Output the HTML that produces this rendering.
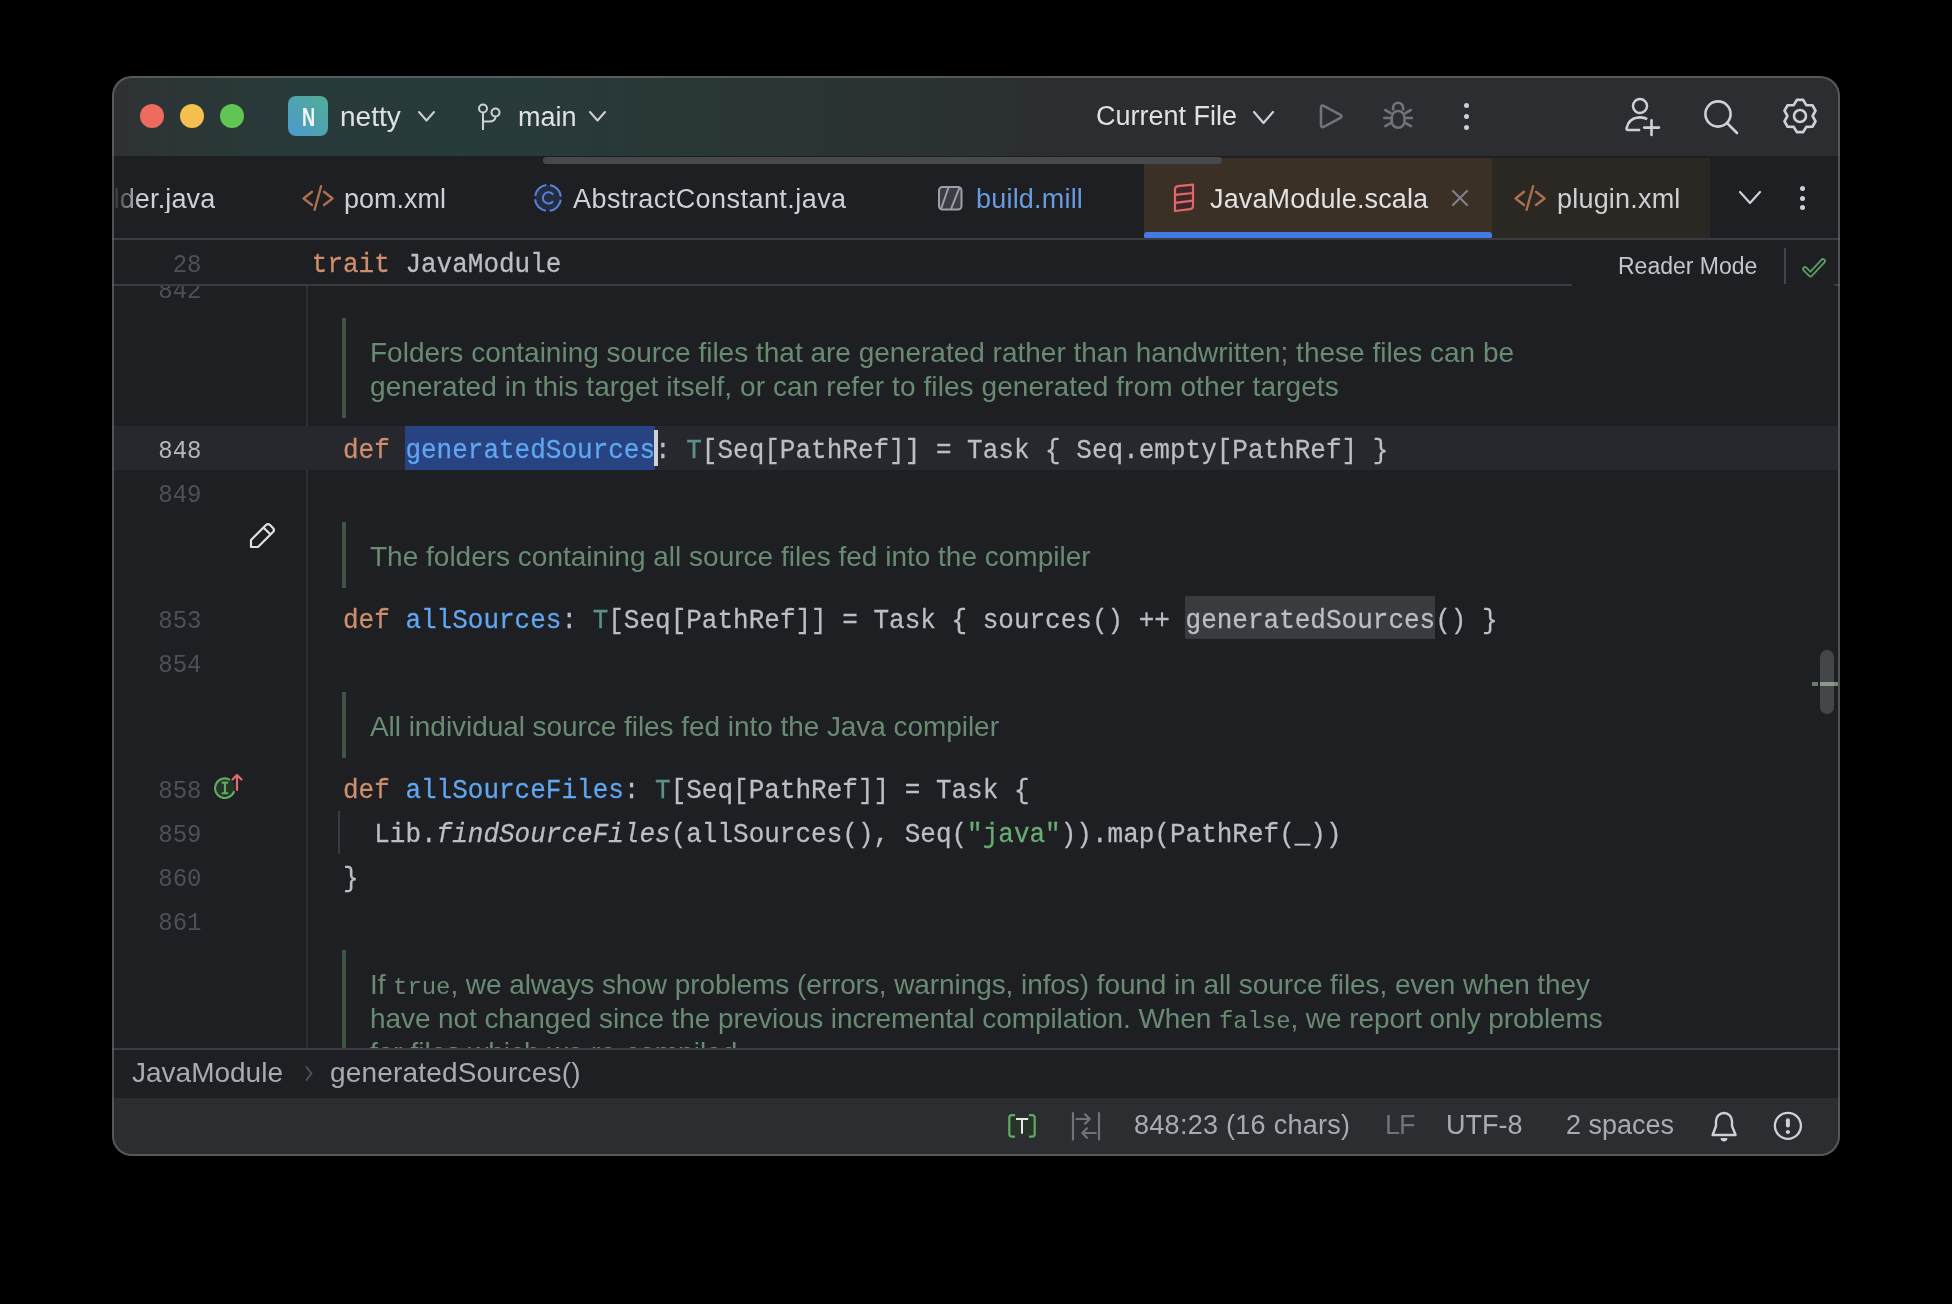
<!DOCTYPE html>
<html><head><meta charset="utf-8"><style>
html,body{margin:0;padding:0;background:#000;width:1952px;height:1304px;overflow:hidden}
#win{position:absolute;left:0;top:0;width:1952px;height:1304px;will-change:transform;clip-path:inset(76px 112px 148px 112px round 20px)}
#frame{position:absolute;left:112px;top:76px;width:1728px;height:1080px;border-radius:20px;box-shadow:inset 0 0 0 2px rgba(120,122,126,0.55);pointer-events:none}
</style></head><body>
<div id="win">
<div style="position:absolute;left:112px;top:76px;width:1728px;height:80px;background:#2B2D30"></div>
<div style="position:absolute;left:112px;top:76px;width:1728px;height:80px;background:linear-gradient(90deg,#2F3133 0px,#2C3536 60px,#283A39 170px,#273B3A 350px,#2A3636 620px,#2B2E31 950px,#2B2D30 1100px)"></div>
<div style="position:absolute;left:140px;top:104px;width:24px;height:24px;background:#ED6A5E;border-radius:50%"></div>
<div style="position:absolute;left:180px;top:104px;width:24px;height:24px;background:#F4BF4F;border-radius:50%"></div>
<div style="position:absolute;left:220px;top:104px;width:24px;height:24px;background:#61C554;border-radius:50%"></div>
<div style="position:absolute;left:288px;top:96px;width:40px;height:40px;border-radius:8px;background:linear-gradient(45deg,#4B9AD2 0%,#4FA5A9 60%,#54AC96 100%)"></div>
<div style="position:absolute;left:301.5px;top:104px;font-family:'Liberation Sans', sans-serif;font-size:26px;line-height:26px;color:#F4F6F8;white-space:pre;font-weight:bold;transform:scaleX(0.7);transform-origin:left">N</div>
<div style="position:absolute;left:340px;top:103px;font-family:'Liberation Sans', sans-serif;font-size:28px;line-height:28px;color:#DFE1E5;white-space:pre;">netty</div>
<svg style="position:absolute;left:417px;top:110px;" width="19" height="12.5" viewBox="0 0 19 12.5" fill="none"><polyline points="2,2 9.5,10.5 17,2" stroke="#CED0D6" stroke-width="2" stroke-linecap="round" stroke-linejoin="round"/></svg>
<svg style="position:absolute;left:472px;top:100px;" width="32" height="34" viewBox="0 0 32 34" fill="none"><circle cx="11" cy="8.5" r="4" stroke="#CED0D6" stroke-width="2"/><circle cx="23.5" cy="12.5" r="4" stroke="#CED0D6" stroke-width="2"/><path d="M11 12.5 V30" stroke="#CED0D6" stroke-width="2"/><path d="M23.5 16.5 Q23.5 21.5 17 21.5 H11" stroke="#CED0D6" stroke-width="2"/></svg>
<div style="position:absolute;left:518px;top:104px;font-family:'Liberation Sans', sans-serif;font-size:27px;line-height:27px;color:#DFE1E5;white-space:pre;">main</div>
<svg style="position:absolute;left:588px;top:110px;" width="19" height="12.5" viewBox="0 0 19 12.5" fill="none"><polyline points="2,2 9.5,10.5 17,2" stroke="#CED0D6" stroke-width="2" stroke-linecap="round" stroke-linejoin="round"/></svg>
<div style="position:absolute;left:1096px;top:103px;font-family:'Liberation Sans', sans-serif;font-size:27px;line-height:27px;color:#DFE1E5;white-space:pre;">Current File</div>
<svg style="position:absolute;left:1252px;top:110px;" width="23" height="15" viewBox="0 0 23 15" fill="none"><polyline points="2,2 11.5,13 21,2" stroke="#CED0D6" stroke-width="2.2" stroke-linecap="round" stroke-linejoin="round"/></svg>
<svg style="position:absolute;left:1314px;top:100px;" width="34" height="34" viewBox="0 0 34 34" fill="none"><path d="M7 8 Q7 4.3 10.2 6.1 L26 14.6 Q29.2 16.3 26 18.1 L10.2 26.6 Q7 28.4 7 24.6 Z" stroke="#6F737A" stroke-width="2.6" stroke-linejoin="round"/></svg>
<svg style="position:absolute;left:1380px;top:98px;" width="36" height="36" viewBox="0 0 36 36" fill="none"><path d="M13.1 12.5 V9.8 A5 5 0 0 1 23.1 9.8 V12.5" stroke="#6F737A" stroke-width="2.6"/><rect x="11.7" y="13" width="12.8" height="16.8" rx="6.4" stroke="#6F737A" stroke-width="2.6"/><path d="M5.3 12 L10.5 15 M30.9 12 L25.7 15 M4.3 20 H10.3 M31.9 20 H25.9 M5.3 28.2 L10.5 25.2 M30.9 28.2 L25.7 25.2" stroke="#6F737A" stroke-width="2.6" stroke-linecap="round"/></svg>
<div style="position:absolute;left:1463.5px;top:103.0px;width:5px;height:5px;background:#CED0D6;border-radius:50%"></div>
<div style="position:absolute;left:1463.5px;top:113.5px;width:5px;height:5px;background:#CED0D6;border-radius:50%"></div>
<div style="position:absolute;left:1463.5px;top:124.5px;width:5px;height:5px;background:#CED0D6;border-radius:50%"></div>
<svg style="position:absolute;left:1620px;top:95px;" width="44" height="44" viewBox="0 0 44 44" fill="none"><circle cx="20" cy="11" r="7" stroke="#CED0D6" stroke-width="2.5"/><path d="M27.2 24.2 Q24.5 22.4 20 22.4 Q9 22.4 6.6 33.3 Q6.3 35 8.2 35 H20.2" stroke="#CED0D6" stroke-width="2.6" stroke-linejoin="round"/><path d="M31.5 25.3 V40 M24.2 32.6 H39" stroke="#CED0D6" stroke-width="2.6" stroke-linecap="round"/></svg>
<svg style="position:absolute;left:1700px;top:96px;" width="44" height="44" viewBox="0 0 44 44" fill="none"><circle cx="18" cy="18" r="12.6" stroke="#CED0D6" stroke-width="2.6"/><path d="M27 27 L37 37" stroke="#CED0D6" stroke-width="2.6" stroke-linecap="round"/></svg>
<svg style="position:absolute;left:1780px;top:96px;" width="40" height="40" viewBox="0 0 40 40" fill="none"><path d="M16.87 3.90 L23.13 3.90 L26.30 9.09 L32.38 9.24 L35.51 14.66 L32.60 20.00 L35.51 25.34 L32.38 30.76 L26.30 30.91 L23.13 36.10 L16.87 36.10 L13.70 30.91 L7.62 30.76 L4.49 25.34 L7.40 20.00 L4.49 14.66 L7.62 9.24 L13.70 9.09 L16.87 3.90 Z" stroke="#CED0D6" stroke-width="2.7" stroke-linejoin="round"/><circle cx="20" cy="20" r="6" stroke="#CED0D6" stroke-width="2.6"/></svg>
<div style="position:absolute;left:112px;top:156px;width:1728px;height:82px;background:#1E1F22"></div>
<div style="position:absolute;left:1144px;top:158px;width:348px;height:80px;background:#3A3026"></div>
<div style="position:absolute;left:1492px;top:158px;width:218px;height:80px;background:#2B2722"></div>
<div style="position:absolute;left:1144px;top:232px;width:348px;height:7px;background:#4479E8;border-radius:3px"></div>
<div style="position:absolute;left:112px;top:238px;width:1728px;height:2px;background:#393B40"></div>
<div style="position:absolute;left:543px;top:157px;width:679px;height:7px;background:#48494D;border-radius:4px"></div>
<div style="position:absolute;left:113.5px;top:186px;font-family:'Liberation Sans', sans-serif;font-size:27px;line-height:27px;color:#CED0D6;white-space:pre;-webkit-mask-image:linear-gradient(90deg,rgba(0,0,0,0.1) 0px,rgba(0,0,0,0.5) 12px,#000 26px);letter-spacing:0.15px">lder.java</div>
<svg style="position:absolute;left:301px;top:184px;" width="36" height="30" viewBox="0 0 36 30" fill="none"><path d="M11 7.8 L2.6 14.5 L11 21 M23 7.8 L31.6 14.5 L23 21 M20.1 2.2 L13.6 25.8" stroke="#AB7050" stroke-width="2.4" stroke-linecap="round" stroke-linejoin="round"/></svg>
<div style="position:absolute;left:344px;top:186px;font-family:'Liberation Sans', sans-serif;font-size:27px;line-height:27px;color:#CED0D6;white-space:pre;">pom.xml</div>
<svg style="position:absolute;left:532px;top:182px;" width="32" height="32" viewBox="0 0 32 32" fill="none"><circle cx="15.9" cy="15.9" r="13" fill="#232D40" stroke="#5A7FD6" stroke-width="2.1" stroke-dasharray="16.62 3.8" stroke-dashoffset="18.52"/><path d="M21.1 12.7 A5.6 5.6 0 1 0 21.1 19.1" stroke="#5A7FD6" stroke-width="2"/></svg>
<div style="position:absolute;left:573px;top:186px;font-family:'Liberation Sans', sans-serif;font-size:27px;line-height:27px;color:#CED0D6;white-space:pre;letter-spacing:0.45px">AbstractConstant.java</div>
<svg style="position:absolute;left:936px;top:184px;" width="28" height="28" viewBox="0 0 28 28" fill="none"><rect x="3" y="3" width="22.5" height="22.5" rx="3.5" fill="#3B3D42" stroke="#9DA0A8" stroke-width="2"/><path d="M12.7 3 L5 25 M23.8 3 L15 25" stroke="#9DA0A8" stroke-width="2"/></svg>
<div style="position:absolute;left:976px;top:186px;font-family:'Liberation Sans', sans-serif;font-size:27px;line-height:27px;color:#6A9BE0;white-space:pre;letter-spacing:0.2px">build.mill</div>
<svg style="position:absolute;left:1170px;top:182px;" width="28" height="32" viewBox="0 0 28 32" fill="none"><path d="M5 29 V7.6 Q5 4.7 8 4.2 L23 2.6 V24 Q23 26.7 20 27.2 Z" fill="#3E2628" stroke="#DF6868" stroke-width="2.2" stroke-linejoin="round"/><path d="M5 12.9 L23 11 M5 20.8 L23 18.7" stroke="#DF6868" stroke-width="2.2"/></svg>
<div style="position:absolute;left:1210px;top:186px;font-family:'Liberation Sans', sans-serif;font-size:27px;line-height:27px;color:#DFE1E5;white-space:pre;letter-spacing:0.13px">JavaModule.scala</div>
<svg style="position:absolute;left:1450px;top:188px;" width="20" height="20" viewBox="0 0 20 20" fill="none"><path d="M3 3 L17 17 M17 3 L3 17" stroke="#7E8188" stroke-width="2.2" stroke-linecap="round"/></svg>
<svg style="position:absolute;left:1513px;top:184px;" width="36" height="30" viewBox="0 0 36 30" fill="none"><path d="M11 7.8 L2.6 14.5 L11 21 M23 7.8 L31.6 14.5 L23 21 M20.1 2.2 L13.6 25.8" stroke="#AB7050" stroke-width="2.4" stroke-linecap="round" stroke-linejoin="round"/></svg>
<div style="position:absolute;left:1557px;top:186px;font-family:'Liberation Sans', sans-serif;font-size:27px;line-height:27px;color:#CED0D6;white-space:pre;letter-spacing:0.2px">plugin.xml</div>
<svg style="position:absolute;left:1738px;top:190px;" width="24" height="15" viewBox="0 0 24 15" fill="none"><polyline points="2,2 12.0,13 22,2" stroke="#CED0D6" stroke-width="2.2" stroke-linecap="round" stroke-linejoin="round"/></svg>
<div style="position:absolute;left:1799.5px;top:186.0px;width:5px;height:5px;background:#CED0D6;border-radius:50%"></div>
<div style="position:absolute;left:1799.5px;top:195.5px;width:5px;height:5px;background:#CED0D6;border-radius:50%"></div>
<div style="position:absolute;left:1799.5px;top:205.0px;width:5px;height:5px;background:#CED0D6;border-radius:50%"></div>
<div style="position:absolute;left:112px;top:240px;width:1728px;height:808px;background:#1E1F22"></div>
<div style="position:absolute;left:306px;top:286px;width:2px;height:762px;background:#2D2F33"></div>
<div style="position:absolute;right:1750.5px;top:280px;font-family:'Liberation Mono', monospace;font-size:24px;line-height:24px;color:#4B5059;white-space:pre;transform:scaleY(1.08);transform-origin:0 18px">842</div>
<div style="position:absolute;left:342px;top:318px;width:4px;height:100px;background:#3F5343"></div>
<div style="position:absolute;left:370px;top:339px;font-family:'Liberation Sans', sans-serif;font-size:28px;line-height:28px;color:#6A8B73;white-space:pre;">Folders containing source files that are generated rather than handwritten; these files can be</div>
<div style="position:absolute;left:370px;top:373px;font-family:'Liberation Sans', sans-serif;font-size:28px;line-height:28px;color:#6A8B73;white-space:pre;letter-spacing:0.083px">generated in this target itself, or can refer to files generated from other targets</div>
<div style="position:absolute;left:112px;top:426px;width:1726px;height:44px;background:#26282E"></div>
<div style="position:absolute;left:405px;top:426px;width:250px;height:44px;background:#284381"></div>
<div style="position:absolute;right:1750.5px;top:440px;font-family:'Liberation Mono', monospace;font-size:24px;line-height:24px;color:#B4B7BD;white-space:pre;transform:scaleY(1.08);transform-origin:0 18px">848</div>
<div style="position:absolute;left:343.0px;top:438px;font-family:'Liberation Mono', monospace;font-size:26px;line-height:26px;color:#CF8E6D;white-space:pre;;transform:scaleY(1.06);transform-origin:0 20px;-webkit-text-stroke:0.25px #CF8E6D">def </div>
<div style="position:absolute;left:405.41px;top:438px;font-family:'Liberation Mono', monospace;font-size:26px;line-height:26px;color:#60A6F0;white-space:pre;;transform:scaleY(1.06);transform-origin:0 20px;-webkit-text-stroke:0.25px #60A6F0">generatedSources</div>
<div style="position:absolute;left:655.05px;top:438px;font-family:'Liberation Mono', monospace;font-size:26px;line-height:26px;color:#BCBEC4;white-space:pre;;transform:scaleY(1.06);transform-origin:0 20px;-webkit-text-stroke:0.25px #BCBEC4">: </div>
<div style="position:absolute;left:686.26px;top:438px;font-family:'Liberation Mono', monospace;font-size:26px;line-height:26px;color:#5B9189;white-space:pre;;transform:scaleY(1.06);transform-origin:0 20px;-webkit-text-stroke:0.25px #5B9189">T</div>
<div style="position:absolute;left:701.86px;top:438px;font-family:'Liberation Mono', monospace;font-size:26px;line-height:26px;color:#BCBEC4;white-space:pre;;transform:scaleY(1.06);transform-origin:0 20px;-webkit-text-stroke:0.25px #BCBEC4">[Seq[PathRef]] = Task { Seq.empty[PathRef] }</div>
<div style="position:absolute;left:654px;top:430px;width:4px;height:36px;background:#CED0D6"></div>
<div style="position:absolute;right:1750.5px;top:484px;font-family:'Liberation Mono', monospace;font-size:24px;line-height:24px;color:#4B5059;white-space:pre;transform:scaleY(1.08);transform-origin:0 18px">849</div>
<div style="position:absolute;left:342px;top:522px;width:4px;height:66px;background:#3F5343"></div>
<div style="position:absolute;left:370px;top:543px;font-family:'Liberation Sans', sans-serif;font-size:28px;line-height:28px;color:#6A8B73;white-space:pre;">The folders containing all source files fed into the compiler</div>
<svg style="position:absolute;left:246px;top:519px;" width="32" height="32" viewBox="0 0 32 32" fill="none"><path d="M5 28 V21 L20 6 Q22 4 24 6 L27 9 Q29 11 27 13 L12 28 Z M17.5 8.5 L24.5 15.5" stroke="#DFE1E5" stroke-width="2.2" stroke-linejoin="round"/></svg>
<div style="position:absolute;right:1750.5px;top:610px;font-family:'Liberation Mono', monospace;font-size:24px;line-height:24px;color:#4B5059;white-space:pre;transform:scaleY(1.08);transform-origin:0 18px">853</div>
<div style="position:absolute;left:1185px;top:596px;width:250px;height:43px;background:#393B3F"></div>
<div style="position:absolute;left:343.0px;top:608px;font-family:'Liberation Mono', monospace;font-size:26px;line-height:26px;color:#CF8E6D;white-space:pre;;transform:scaleY(1.06);transform-origin:0 20px;-webkit-text-stroke:0.25px #CF8E6D">def </div>
<div style="position:absolute;left:405.41px;top:608px;font-family:'Liberation Mono', monospace;font-size:26px;line-height:26px;color:#60A6F0;white-space:pre;;transform:scaleY(1.06);transform-origin:0 20px;-webkit-text-stroke:0.25px #60A6F0">allSources</div>
<div style="position:absolute;left:561.44px;top:608px;font-family:'Liberation Mono', monospace;font-size:26px;line-height:26px;color:#BCBEC4;white-space:pre;;transform:scaleY(1.06);transform-origin:0 20px;-webkit-text-stroke:0.25px #BCBEC4">: </div>
<div style="position:absolute;left:592.64px;top:608px;font-family:'Liberation Mono', monospace;font-size:26px;line-height:26px;color:#5B9189;white-space:pre;;transform:scaleY(1.06);transform-origin:0 20px;-webkit-text-stroke:0.25px #5B9189">T</div>
<div style="position:absolute;left:608.25px;top:608px;font-family:'Liberation Mono', monospace;font-size:26px;line-height:26px;color:#BCBEC4;white-space:pre;;transform:scaleY(1.06);transform-origin:0 20px;-webkit-text-stroke:0.25px #BCBEC4">[Seq[PathRef]] = Task { sources() ++ generatedSources() }</div>
<div style="position:absolute;right:1750.5px;top:654px;font-family:'Liberation Mono', monospace;font-size:24px;line-height:24px;color:#4B5059;white-space:pre;transform:scaleY(1.08);transform-origin:0 18px">854</div>
<div style="position:absolute;left:342px;top:692px;width:4px;height:66px;background:#3F5343"></div>
<div style="position:absolute;left:370px;top:713px;font-family:'Liberation Sans', sans-serif;font-size:28px;line-height:28px;color:#6A8B73;white-space:pre;letter-spacing:-0.055px">All individual source files fed into the Java compiler</div>
<div style="position:absolute;right:1750.5px;top:780px;font-family:'Liberation Mono', monospace;font-size:24px;line-height:24px;color:#4B5059;white-space:pre;transform:scaleY(1.08);transform-origin:0 18px">858</div>
<svg style="position:absolute;left:210px;top:770px;" width="36" height="30" viewBox="0 0 36 30" fill="none"><circle cx="14.6" cy="18" r="10.2" fill="#253626"/><path d="M24.2 21.2 A9.8 9.8 0 1 1 20 9.8" stroke="#62A867" stroke-width="2.1"/><path d="M11.7 12.6 H18.2 M11.7 23.3 H18.2 M15 12.6 V23.3" stroke="#62A867" stroke-width="2.1"/><path d="M27 20 V5 M22.5 9.5 L27 5 L31.5 9.5" stroke="#E06C6C" stroke-width="2.2" stroke-linecap="round" stroke-linejoin="round"/></svg>
<div style="position:absolute;left:343.0px;top:778px;font-family:'Liberation Mono', monospace;font-size:26px;line-height:26px;color:#CF8E6D;white-space:pre;;transform:scaleY(1.06);transform-origin:0 20px;-webkit-text-stroke:0.25px #CF8E6D">def </div>
<div style="position:absolute;left:405.41px;top:778px;font-family:'Liberation Mono', monospace;font-size:26px;line-height:26px;color:#60A6F0;white-space:pre;;transform:scaleY(1.06);transform-origin:0 20px;-webkit-text-stroke:0.25px #60A6F0">allSourceFiles</div>
<div style="position:absolute;left:623.85px;top:778px;font-family:'Liberation Mono', monospace;font-size:26px;line-height:26px;color:#BCBEC4;white-space:pre;;transform:scaleY(1.06);transform-origin:0 20px;-webkit-text-stroke:0.25px #BCBEC4">: </div>
<div style="position:absolute;left:655.05px;top:778px;font-family:'Liberation Mono', monospace;font-size:26px;line-height:26px;color:#5B9189;white-space:pre;;transform:scaleY(1.06);transform-origin:0 20px;-webkit-text-stroke:0.25px #5B9189">T</div>
<div style="position:absolute;left:670.66px;top:778px;font-family:'Liberation Mono', monospace;font-size:26px;line-height:26px;color:#BCBEC4;white-space:pre;;transform:scaleY(1.06);transform-origin:0 20px;-webkit-text-stroke:0.25px #BCBEC4">[Seq[PathRef]] = Task {</div>
<div style="position:absolute;right:1750.5px;top:824px;font-family:'Liberation Mono', monospace;font-size:24px;line-height:24px;color:#4B5059;white-space:pre;transform:scaleY(1.08);transform-origin:0 18px">859</div>
<div style="position:absolute;left:338px;top:811px;width:2px;height:43px;background:#393B40"></div>
<div style="position:absolute;left:374.21px;top:822px;font-family:'Liberation Mono', monospace;font-size:26px;line-height:26px;color:#BCBEC4;white-space:pre;;transform:scaleY(1.06);transform-origin:0 20px;-webkit-text-stroke:0.25px #BCBEC4">Lib.</div>
<div style="position:absolute;left:436.62px;top:822px;font-family:'Liberation Mono', monospace;font-size:26px;line-height:26px;color:#BCBEC4;white-space:pre;font-style:italic;transform:scaleY(1.06);transform-origin:0 20px;-webkit-text-stroke:0.25px #BCBEC4">findSourceFiles</div>
<div style="position:absolute;left:670.66px;top:822px;font-family:'Liberation Mono', monospace;font-size:26px;line-height:26px;color:#BCBEC4;white-space:pre;;transform:scaleY(1.06);transform-origin:0 20px;-webkit-text-stroke:0.25px #BCBEC4">(allSources(), Seq(</div>
<div style="position:absolute;left:967.11px;top:822px;font-family:'Liberation Mono', monospace;font-size:26px;line-height:26px;color:#6AAB73;white-space:pre;;transform:scaleY(1.06);transform-origin:0 20px;-webkit-text-stroke:0.25px #6AAB73">"java"</div>
<div style="position:absolute;left:1060.72px;top:822px;font-family:'Liberation Mono', monospace;font-size:26px;line-height:26px;color:#BCBEC4;white-space:pre;;transform:scaleY(1.06);transform-origin:0 20px;-webkit-text-stroke:0.25px #BCBEC4">)).map(PathRef(_))</div>
<div style="position:absolute;right:1750.5px;top:868px;font-family:'Liberation Mono', monospace;font-size:24px;line-height:24px;color:#4B5059;white-space:pre;transform:scaleY(1.08);transform-origin:0 18px">860</div>
<div style="position:absolute;left:343.0px;top:866px;font-family:'Liberation Mono', monospace;font-size:26px;line-height:26px;color:#BCBEC4;white-space:pre;;transform:scaleY(1.06);transform-origin:0 20px;-webkit-text-stroke:0.25px #BCBEC4">}</div>
<div style="position:absolute;right:1750.5px;top:912px;font-family:'Liberation Mono', monospace;font-size:24px;line-height:24px;color:#4B5059;white-space:pre;transform:scaleY(1.08);transform-origin:0 18px">861</div>
<div style="position:absolute;left:342px;top:950px;width:4px;height:98px;background:#3F5343"></div>
<div style="position:absolute;left:370px;top:971px;font-family:'Liberation Sans', sans-serif;font-size:28px;line-height:28px;color:#6A8B73;white-space:pre;letter-spacing:-0.08px">If <span style="font-family:&quot;Liberation Mono&quot;,monospace;font-size:24px">true</span>, we always show problems (errors, warnings, infos) found in all source files, even when they</div>
<div style="position:absolute;left:370px;top:1005px;font-family:'Liberation Sans', sans-serif;font-size:28px;line-height:28px;color:#6A8B73;white-space:pre;letter-spacing:-0.085px">have not changed since the previous incremental compilation. When <span style="font-family:&quot;Liberation Mono&quot;,monospace;font-size:24px">false</span>, we report only problems</div>
<div style="position:absolute;left:370px;top:1039px;font-family:'Liberation Sans', sans-serif;font-size:28px;line-height:28px;color:#6A8B73;white-space:pre;">for files which we re-compiled.</div>
<div style="position:absolute;left:1820px;top:650px;width:14px;height:64px;background:#45464A;border-radius:7px"></div>
<div style="position:absolute;left:1812px;top:682px;width:6px;height:4px;background:#63806A"></div>
<div style="position:absolute;left:1820px;top:682px;width:14px;height:4px;background:#869B8B"></div>
<div style="position:absolute;left:1834px;top:682px;width:4px;height:4px;background:#6F8A75"></div>
<div style="position:absolute;left:112px;top:240px;width:1728px;height:44px;background:#1E1F22"></div>
<div style="position:absolute;right:1750.5px;top:254px;font-family:'Liberation Mono', monospace;font-size:24px;line-height:24px;color:#4B5059;white-space:pre;transform:scaleY(1.08);transform-origin:0 18px">28</div>
<div style="position:absolute;left:311.8px;top:252px;font-family:'Liberation Mono', monospace;font-size:26px;line-height:26px;color:#CF8E6D;white-space:pre;;transform:scaleY(1.06);transform-origin:0 20px;-webkit-text-stroke:0.25px #CF8E6D">trait </div>
<div style="position:absolute;left:405.42px;top:252px;font-family:'Liberation Mono', monospace;font-size:26px;line-height:26px;color:#BCBEC4;white-space:pre;;transform:scaleY(1.06);transform-origin:0 20px;-webkit-text-stroke:0.25px #BCBEC4">JavaModule</div>
<div style="position:absolute;left:112px;top:284px;width:1460px;height:2px;background:#393B40"></div>
<div style="position:absolute;left:1834px;top:284px;width:6px;height:2px;background:#393B40"></div>
<div style="position:absolute;left:1618px;top:255px;font-family:'Liberation Sans', sans-serif;font-size:23px;line-height:23px;color:#C4C6CB;white-space:pre;">Reader Mode</div>
<div style="position:absolute;left:1784px;top:248px;width:2px;height:36px;background:#43454A"></div>
<svg style="position:absolute;left:1798px;top:252px;" width="32" height="28" viewBox="0 0 32 28" fill="none"><path d="M7 17 L12.5 22.5 L25 9" stroke="#5A9E61" stroke-width="5.6" stroke-linecap="round" stroke-linejoin="round"/><path d="M7 17 L12.5 22.5 L25 9" stroke="#1E1F22" stroke-width="2" stroke-linecap="round" stroke-linejoin="round"/></svg>
<div style="position:absolute;left:112px;top:1048px;width:1728px;height:2px;background:#393B40"></div>
<div style="position:absolute;left:112px;top:1050px;width:1728px;height:48px;background:#1E1F22"></div>
<div style="position:absolute;left:132px;top:1059px;font-family:'Liberation Sans', sans-serif;font-size:28px;line-height:28px;color:#A8ABB0;white-space:pre;">JavaModule</div>
<svg style="position:absolute;left:302px;top:1063px;" width="14" height="22" viewBox="0 0 14 22" fill="none"><polyline points="4.5,4 9.5,10.5 4.5,17" stroke="#4E5157" stroke-width="2" stroke-linecap="round" stroke-linejoin="round"/></svg>
<div style="position:absolute;left:330px;top:1059px;font-family:'Liberation Sans', sans-serif;font-size:28px;line-height:28px;color:#A8ABB0;white-space:pre;letter-spacing:0.18px">generatedSources()</div>
<div style="position:absolute;left:112px;top:1098px;width:1728px;height:58px;background:#2B2D30"></div>
<svg style="position:absolute;left:1006px;top:1112px;" width="32" height="28" viewBox="0 0 32 28" fill="none"><rect x="4" y="4" width="24" height="20" fill="#263527"/><path d="M9 3.1 H6 Q3.3 3.1 3.3 5.8 V21.9 Q3.3 24.6 6 24.6 H9 M23 3.1 H26 Q28.7 3.1 28.7 5.8 V21.9 Q28.7 24.6 26 24.6 H23" stroke="#62A867" stroke-width="2.2"/><path d="M10 7 H22.2 M16 7 V21.7" stroke="#E8E8EA" stroke-width="2"/></svg>
<svg style="position:absolute;left:1070px;top:1110px;" width="32" height="32" viewBox="0 0 32 32" fill="none"><path d="M3 3 V29.5 M29 3 V29.5 M6.5 9 H19.8 M15 4.3 L19.8 9 L15 13.7 M25.8 23 H12.3 M17 18.3 L12.3 23 L17 27.7" stroke="#6F737A" stroke-width="2.2" stroke-linecap="round" stroke-linejoin="round"/></svg>
<div style="position:absolute;left:1134px;top:1112px;font-family:'Liberation Sans', sans-serif;font-size:27px;line-height:27px;color:#A8ABB0;white-space:pre;letter-spacing:0.28px">848:23 (16 chars)</div>
<div style="position:absolute;left:1385px;top:1112px;font-family:'Liberation Sans', sans-serif;font-size:27px;line-height:27px;color:#6F737A;white-space:pre;letter-spacing:-1px">LF</div>
<div style="position:absolute;left:1446px;top:1112px;font-family:'Liberation Sans', sans-serif;font-size:27px;line-height:27px;color:#A8ABB0;white-space:pre;">UTF-8</div>
<div style="position:absolute;left:1566px;top:1112px;font-family:'Liberation Sans', sans-serif;font-size:27px;line-height:27px;color:#A8ABB0;white-space:pre;">2 spaces</div>
<svg style="position:absolute;left:1706px;top:1108px;" width="36" height="36" viewBox="0 0 36 36" fill="none"><path d="M6.6 27 L10 18 V13 A8 8 0 0 1 26 13 V18 L29.6 27 Z" stroke="#CED0D6" stroke-width="2.4" stroke-linejoin="round"/><path d="M14.6 30 H21.4 A3.4 3.4 0 0 1 14.6 30 Z" fill="#CED0D6"/></svg>
<svg style="position:absolute;left:1770px;top:1108px;" width="36" height="36" viewBox="0 0 36 36" fill="none"><circle cx="17.9" cy="17.8" r="13" stroke="#CED0D6" stroke-width="2.3"/><path d="M17.9 12.2 V17.6" stroke="#CED0D6" stroke-width="4" stroke-linecap="round"/><circle cx="17.9" cy="24" r="2.1" fill="#CED0D6"/></svg>
</div>
<div id="frame"></div>
</body></html>
